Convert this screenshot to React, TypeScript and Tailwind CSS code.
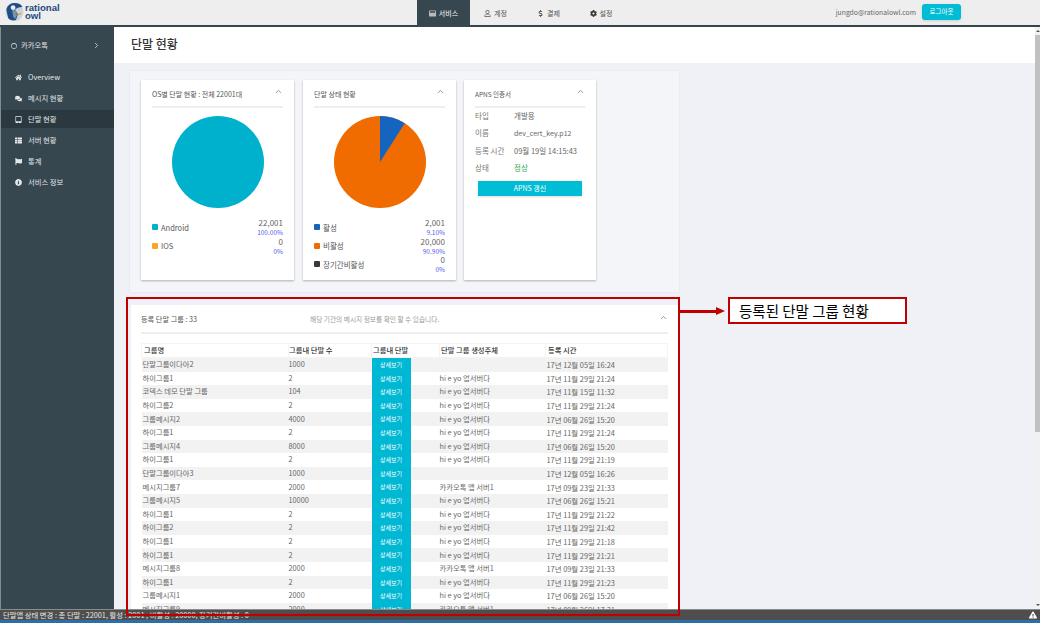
import React from "react";
import { FaHome, FaComments, FaTabletAlt, FaThList, FaFlag, FaInfoCircle, FaRegUser, FaDollarSign, FaCog, FaRegCircle, FaExclamationTriangle, FaWindowMaximize } from "react-icons/fa";
import { FiChevronRight, FiChevronUp } from "react-icons/fi";

const font = "font-['Noto_Sans_CJK_KR','Noto_Sans',sans-serif]";

const nav = [
  { icon: FaHome, label: "Overview" },
  { icon: FaComments, label: "메시지 현황" },
  { icon: FaTabletAlt, label: "단말 현황", active: true },
  { icon: FaThList, label: "서버 현황" },
  { icon: FaFlag, label: "통계" },
  { icon: FaInfoCircle, label: "서비스 정보" },
];

const A = "hi e yo 업서버다";
const K = "카카오톡 앱 서버1";
const rows = [
  ["단말그룹이다아2", "1000", "", "17년 12월 05일 16:24"],
  ["하이그룹1", "2", A, "17년 11월 29일 21:24"],
  ["코덱스 데모 단말 그룹", "104", A, "17년 11월 15일 11:32"],
  ["하이그룹2", "2", A, "17년 11월 29일 21:24"],
  ["그룹메시지2", "4000", A, "17년 06월 26일 15:20"],
  ["하이그룹1", "2", A, "17년 11월 29일 21:24"],
  ["그룹메시지4", "8000", A, "17년 06월 26일 15:20"],
  ["하이그룹1", "2", A, "17년 11월 29일 21:19"],
  ["단말그룹이다아3", "1000", "", "17년 12월 05일 16:26"],
  ["메시지그룹7", "2000", K, "17년 09월 23일 21:33"],
  ["그룹메시지5", "10000", A, "17년 06월 26일 15:21"],
  ["하이그룹1", "2", A, "17년 11월 29일 21:22"],
  ["하이그룹2", "2", A, "17년 11월 29일 21:42"],
  ["하이그룹1", "2", A, "17년 11월 29일 21:18"],
  ["하이그룹1", "2", A, "17년 11월 29일 21:21"],
  ["메시지그룹8", "2000", K, "17년 09월 23일 21:33"],
  ["하이그룹1", "2", A, "17년 11월 29일 21:23"],
  ["그룹메시지1", "2000", A, "17년 06월 26일 15:20"],
  ["메시지그룹9", "2000", K, "17년 09월 26일 17:31"],
];

function Logo() {
  return (
    <div className="flex items-center gap-[1px] pl-[5px]">
      <svg width="19" height="20" viewBox="0 0 19 21" className="shrink-0">
        <circle cx="9.5" cy="10.5" r="9.5" fill="#c9d3dd" />
        <path d="M1 8C2 3 6 1 10 1c3 0 6 1 8 4l-5 1-3 2 3 5-2 6c-3 1-6 0-8-2L2 13Z" fill="#1d4f86" />
        <circle cx="8" cy="6" r="2.5" fill="#e8eef3" />
        <path d="M7 8l4 1 1 5-2 4-2-3Z" fill="#7c93a8" />
        <path d="M13 12l4-1-1 2-3 1Z" fill="#e0b030" />
      </svg>
      <div className="text-[#1d4a80] text-[9.6px] leading-[8.5px] font-bold font-['Liberation_Sans',sans-serif]">
        <div>rational</div>
        <div>owl</div>
      </div>
    </div>
  );
}

function Card({ title, children, w, titleSize }: { title: string; children: React.ReactNode; w: string; titleSize: string }) {
  return (
    <div className={`${w} h-[200px] shrink-0 bg-white shadow-[0_1px_2px_rgba(0,0,0,0.28)] px-[11px] pt-[8px]`}>
      <div className="flex justify-between h-[17px] border-b-2 border-[#eeeeee] box-content pb-[1px]">
        <span className={`${titleSize} leading-[12px] text-[#555]`}>{title}</span>
        <FiChevronUp className="text-[#777] w-[9px] h-[9px] mt-[-1px]" />
      </div>
      {children}
    </div>
  );
}

function LegendRow({ color, label, value, pct }: { color: string; label: string; value: string; pct: string }) {
  return (
    <div className="flex justify-between items-center h-[18.5px]">
      <div className="flex items-center gap-[3px] text-[7.5px] text-[#555]">
        <span className="w-[6px] h-[6px] rounded-[1px]" style={{ background: color }} />
        <span>{label}</span>
      </div>
      <div className="text-right">
        <div className="text-[8px] leading-[10px] text-[#666]">{value}</div>
        <div className="text-[6.5px] leading-[8px] text-[#5a5af0]">{pct}</div>
      </div>
    </div>
  );
}

export default function App() {
  return (
    <div className={`w-[1040px] h-[623px] overflow-hidden relative flex flex-col bg-white ${font}`}>
      <header className="h-[27px] shrink-0 bg-[#eeeeee] border-b-2 border-[#34454e] flex relative">
        <div className="w-[417px]"><div className="pt-[2px]"><Logo /></div></div>
        <nav className="flex h-[27px] text-[7px] text-[#555]">
          <div className="w-[53px] bg-[#36474f] text-white flex items-center justify-center gap-[3px]">
            <FaWindowMaximize className="w-[7px] h-[7px] text-[#bbb]" /> 서비스
          </div>
          <div className="w-[51px] flex items-center justify-center gap-[3px]"><FaRegUser className="w-[7px] h-[7px]" /> 계정</div>
          <div className="w-[55px] flex items-center justify-center gap-[3px]"><FaDollarSign className="w-[7px] h-[7px]" /> 결제</div>
          <div className="w-[50px] flex items-center justify-center gap-[3px]"><FaCog className="w-[7px] h-[7px] text-[#333]" /> 설정</div>
        </nav>
        <div className="flex-1 flex items-start justify-end pr-[79px] pt-[4px] gap-[6px]">
          <span className="text-[6.8px] leading-[16px] text-[#666]">jungdo@rationalowl.com</span>
          <button className="w-[39px] h-[16px] rounded-[3px] bg-[#00bcd4] text-white text-[6.5px] shadow-sm">로그아웃</button>
        </div>
      </header>

      <div className="flex-1 flex min-h-0">
        <aside className="w-[114px] shrink-0 bg-[#36474f] border-l border-[#7f8d95] text-[#e4e8ea] text-[7.3px]">
          <div className="flex items-center h-[37px] pl-[10px] pr-[13px] justify-between">
            <span className="flex items-center gap-[4px]"><FaRegCircle className="w-[6px] h-[6px]" />카카오톡</span>
            <FiChevronRight className="w-[9px] h-[9px]" />
          </div>
          <div className="mt-[4px] flex flex-col gap-[3px]">
            {nav.map((n) => {
              const I = n.icon;
              return (
                <div key={n.label} className={`h-[18px] flex items-center pl-[14px] gap-[6px] ${n.active ? "bg-[#2b383f]" : ""}`}>
                  <I className="w-[7px] h-[7px]" />
                  <span>{n.label}</span>
                </div>
              );
            })}
          </div>
        </aside>

        <main className="flex-1 min-w-0 bg-[#eff1f6] relative">
          <div className="h-[36px] bg-white flex items-center pl-[17px] pb-[2px] text-[#333] text-[12px] font-medium">단말 현황</div>
          <div className="pl-[16px] pt-[8px]">
            <section className="w-[549px] h-[221px] bg-[#f4f5f9] shadow-[0_0_2px_rgba(0,0,0,0.08)] flex gap-[9px] pl-[11px] pt-[9px]">
              <Card title="OS별 단말 현황 : 전체 22001대" w="w-[153px]" titleSize="text-[7px]">
                <svg width="92" height="92" viewBox="0 0 92 92" className="mx-auto mt-[8px] block">
                  <circle cx="46" cy="46" r="46" fill="#00b1cd" />
                </svg>
                <div className="mt-[10px]">
                  <LegendRow color="#00b1cd" label="Android" value="22,001" pct="100.00%" />
                  <LegendRow color="#f9a825" label="IOS" value="0" pct="0%" />
                </div>
              </Card>
              <Card title="단말 상태 현황" w="w-[153px]" titleSize="text-[7px]">
                <svg width="92" height="92" viewBox="0 0 92 92" className="mx-auto mt-[8px] block">
                  <circle cx="46" cy="46" r="46" fill="#f06c00" />
                  <path d="M46 46V0A46 46 0 0 1 70.8 7.3Z" fill="#1565c0" />
                </svg>
                <div className="mt-[10px]">
                  <LegendRow color="#1565c0" label="활성" value="2,001" pct="9.10%" />
                  <LegendRow color="#f06c00" label="비활성" value="20,000" pct="90.90%" />
                  <LegendRow color="#3a3a3a" label="장기간비활성" value="0" pct="0%" />
                </div>
              </Card>
              <div className="ml-[-1px]">
                <Card title="APNS 인증서" w="w-[132px]" titleSize="text-[6.5px]">
                  <div className="text-[7.5px] text-[#666] mt-[-1px]">
                    {[
                      ["타입", "개발용", ""],
                      ["이름", "dev_cert_key.p12", "text-[7px]"],
                      ["등록 시간", "09월 19일 14:15:43", ""],
                      ["상태", "정상", "text-[#3aa655]"],
                    ].map(([a, b, c]) => (
                      <div key={a} className="flex h-[17.3px] items-center">
                        <span className="w-[39px] text-[#777]">{a}</span>
                        <span className={c}>{b}</span>
                      </div>
                    ))}
                  </div>
                  <button className="block mx-auto w-[104px] h-[15px] mt-[5px] bg-[#00bcd4] text-white text-[7px] shadow-sm">APNS 갱신</button>
                </Card>
              </div>
            </section>

            <section className="w-[547px] h-[304px] mt-[13px] ml-[1px] bg-white overflow-hidden px-[10px] pt-[4px] relative">
              <div className="h-[20px] flex border-b-2 border-[#eeeeee] box-content pb-[3px] relative">
                <span className="text-[7.2px] leading-[16px] mt-[2px] text-[#555]">등록 단말 그룹 : 33</span>
                <span className="absolute left-[169px] top-[2px] text-[6.7px] leading-[16px] text-[#999]">해당 기간의 메시지 정보를 확인 할 수 있습니다.</span>
                <FiChevronUp className="absolute right-0 top-[4px] text-[#777] w-[9px] h-[9px]" />
              </div>
              <table className="w-[527px] mt-[9px] table-fixed border-collapse text-[7.3px] text-[#666]">
                <colgroup>
                  <col className="w-[147px]" /><col className="w-[83px]" /><col className="w-[68px]" /><col className="w-[106px]" /><col />
                </colgroup>
                <thead>
                  <tr className="h-[14px] text-[#333] font-medium border border-[#f4f4f4]">
                    <th className="text-left pl-[2px] font-medium">그룹명</th>
                    <th className="text-left font-medium border-l border-[#f4f4f4]">그룹내 단말 수</th>
                    <th className="text-left pl-[1px] font-medium border-l border-[#f4f4f4]">그룹내 단말</th>
                    <th className="text-left pl-[1px] font-medium border-l border-[#f4f4f4]">단말 그룹 생성주체</th>
                    <th className="text-left pl-[2px] font-medium border-l border-[#f4f4f4]">등록 시간</th>
                  </tr>
                </thead>
                <tbody>
                  {rows.map((r, i) => (
                    <tr key={i} className={`h-[13.6px] ${i % 2 === 0 ? "bg-[#f2f2f2]" : "bg-white"}`}>
                      <td className="p-0 pl-[1px] leading-[13px] whitespace-nowrap">{r[0]}</td>
                      <td className="p-0 leading-[13px]">{r[1]}</td>
                      <td className="p-0">
                        <div className="h-[13.6px] w-[39px] bg-[#00b8d4] text-white text-[6px] leading-[13px] text-center">상세보기</div>
                      </td>
                      <td className="p-0 leading-[13px] whitespace-nowrap">{r[2]}</td>
                      <td className="p-0 pl-[1px] leading-[13px] whitespace-nowrap text-[7.4px]">{r[3]}</td>
                    </tr>
                  ))}
                </tbody>
              </table>
            </section>
          </div>

          <div className="absolute z-20 left-[12px] top-[270px] w-[554px] h-[319px] border-2 border-[#c00000]" />
          <div className="absolute left-[565px] top-[283px] w-[38px] h-[3px] bg-[#c00000]" />
          <div className="absolute left-[602px] top-[280px] w-0 h-0 border-y-[4px] border-y-transparent border-l-[9px] border-l-[#c00000]" />
          <div className="absolute left-[614px] top-[270px] w-[179px] h-[27px] bg-white border-2 border-[#c00000] flex items-center pl-[9px] text-[14.5px] text-black">등록된 단말 그룹 현황</div>

          <div className="absolute right-0 top-0 bottom-[14px] w-[5px] bg-[#f1f1f1]">
            <div className="absolute top-[3px] left-[1px] w-0 h-0 border-x-[2px] border-x-transparent border-b-[2px] border-b-[#555]" />
            <div className="w-full h-[397px] mt-[8px] bg-[#c1c1c1]" />
            <div className="absolute bottom-[3px] left-[1px] w-0 h-0 border-x-[2px] border-x-transparent border-t-[2px] border-t-[#555]" />
          </div>
        </main>
      </div>

      <footer className="absolute left-0 right-0 bottom-0 h-[14px] bg-[#4e4e4e] border-t border-[#8a8a8a] border-b-[3px] border-b-[#2d6ea8] text-[#e8e8e8] text-[7.3px] leading-[10px] pl-[3px] flex justify-between pr-[3px]">
        <span>단말앱 상태 변경 : 총 단말 : 22001, 활성 : 2001 , 비활성 : 20000, 장기간비활성 : 0</span>
        <FaExclamationTriangle className="w-[8px] h-[8px] text-white mt-[1px]" />
      </footer>
    </div>
  );
}
